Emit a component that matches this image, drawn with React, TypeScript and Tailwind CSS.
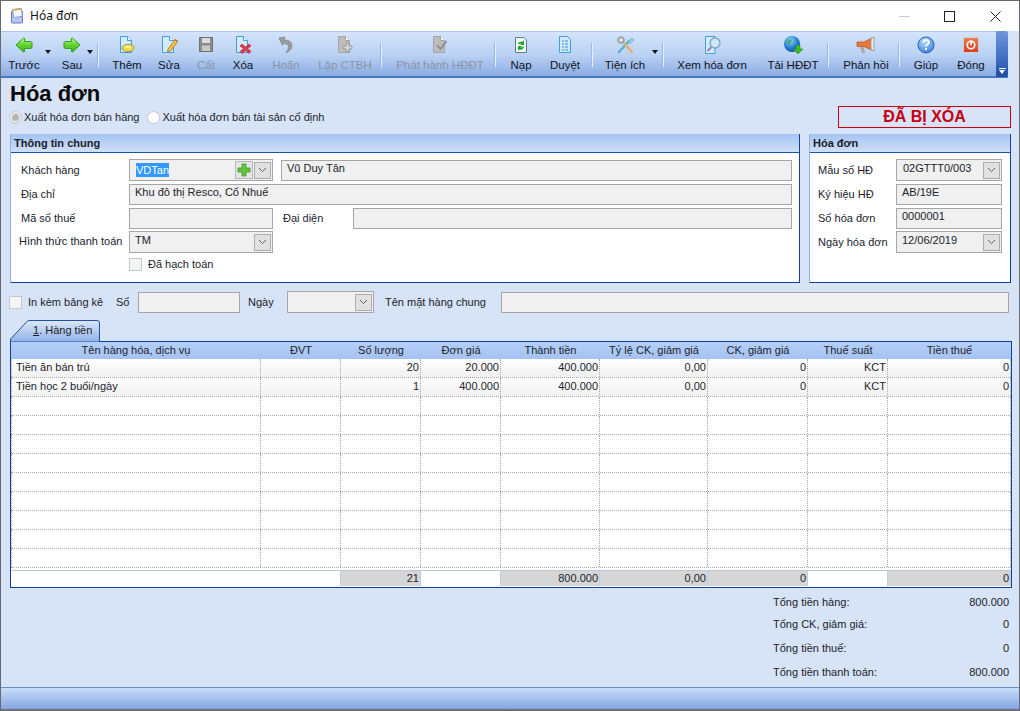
import React from "react";

const Arrow = ({ dir }: { dir: "l" | "r" }) => (
  <svg width="18" height="16" viewBox="0 0 18 16" className={dir === "r" ? "-scale-x-100" : ""}>
    <defs>
      <linearGradient id="ga" x1="0" y1="0" x2="0" y2="1">
        <stop offset="0" stopColor="#c4f58a" />
        <stop offset="0.5" stopColor="#62d230" />
        <stop offset="1" stopColor="#3fb020" />
      </linearGradient>
    </defs>
    <path d="M1 8 L8.5 1 Q9.5 0.6 9.5 2 V4.5 H15.5 Q17 4.5 17 6 V10 Q17 11.5 15.5 11.5 H9.5 V14 Q9.5 15.4 8.5 15 Z" fill="url(#ga)" stroke="#33a01e" strokeWidth="1" strokeLinejoin="round" />
  </svg>
);

const Doc = ({ c = "#3f9fe0", fill = "#d3eafb", children }: { c?: string; fill?: string; children?: React.ReactNode }) => (
  <svg width="20" height="20" viewBox="0 0 20 20">
    <path d="M3.5 1.5 H10.5 L14.5 5.5 V17.5 H3.5 Z" fill={fill} stroke={c} />
    <path d="M10.5 1.5 V5.5 H14.5" fill="#fff" stroke={c} />
    {children}
  </svg>
);

const icons: Record<string, React.ReactNode> = {
  them: (
    <Doc>
      <ellipse cx="11" cy="13" rx="6" ry="3.6" fill="#f0d94a" stroke="#a89a2a" />
      <ellipse cx="11" cy="12" rx="3" ry="1.4" fill="#fbf3a0" />
    </Doc>
  ),
  sua: (
    <Doc>
      <path d="M9 14 L16 4.5 L18.5 6.5 L11.5 16 L8.5 17 Z" fill="#f4c542" stroke="#b8862a" />
      <path d="M16 4.5 L18.5 6.5" stroke="#d05a2a" strokeWidth="1.5" />
    </Doc>
  ),
  cat: (
    <svg width="20" height="20" viewBox="0 0 20 20">
      <path d="M3.5 2.5 H16.5 V16.5 H3.5 Z" fill="#8d8d8d" stroke="#6f6f6f" />
      <rect x="6" y="3" width="8" height="5" fill="#dcdcdc" />
      <rect x="6" y="10.5" width="8" height="5.5" fill="#c8c8c8" />
    </svg>
  ),
  xoa: (
    <Doc>
      <path d="M9 9 L12.5 12 L16 9 L18 11 L14.5 13.5 L18 16.5 L16 18.5 L12.5 15.5 L9 18.5 L7 16.5 L10.5 13.5 L7 11 Z" fill="#e0394a" stroke="#b02030" strokeWidth="0.6" />
    </Doc>
  ),
  hoan: (
    <svg width="20" height="20" viewBox="0 0 20 20">
      <path d="M3 3 L9 2 L8 5 Q16 5 16 11 Q16 15 10 18 Q13 14 12.5 11 Q12 8.5 7 8.5 L6.5 10.5 Z" fill="#9c9c9c" stroke="#868686" strokeWidth="0.8" strokeLinejoin="round" />
    </svg>
  ),
  lap: (
    <Doc c="#a4a4a4" fill="#bdbdbd">
      <path d="M11 8 H14 V11 H17 V14 H14 V17 H11 V14 H8 V11 H11 Z" fill="#d4d4d4" stroke="#9a9a9a" />
    </Doc>
  ),
  phat: (
    <Doc c="#a4a4a4" fill="#bdbdbd">
      <path d="M7 10 L10.5 14 L16.5 6" fill="none" stroke="#8a8a8a" strokeWidth="1.8" />
    </Doc>
  ),
  nap: (
    <svg width="20" height="20" viewBox="0 0 20 20">
      <path d="M4.5 2.5 H13 L15.5 5 V17.5 H4.5 Z" fill="#f4f8f4" stroke="#5d7f8a" />
      <path d="M7 8.5 Q8 6 12 6.5 L13 5 V10 H9 L10.5 8.5 Q9 8.2 8.6 9.5 Z" fill="#1ea52c" />
      <path d="M13 11.5 Q12 15.5 8 14.5 L7 16 V11 H11 L9.5 12.5 Q11 12.9 11.4 11.5 Z" fill="#1ea52c" />
    </svg>
  ),
  duyet: (
    <svg width="20" height="20" viewBox="0 0 20 20">
      <path d="M4.5 1.5 H12.5 L15.5 4.5 V17.5 H4.5 Z" fill="#cfe8fa" stroke="#3f9fe0" />
      <path d="M7 6 H9 M10 6 H13 M7 9 H9 M10 9 H13 M7 12 H9 M10 12 H13 M7 15 H9 M10 15 H13" stroke="#3a8fd8" strokeWidth="1.2" />
    </svg>
  ),
  tien: (
    <svg width="22" height="20" viewBox="0 0 22 20">
      <path d="M5 17 L15 6" stroke="#5fb0dc" strokeWidth="2.6" strokeLinecap="round" />
      <path d="M14 7 L18 3 L20 5 L16 9 Z" fill="#9ad0ec" stroke="#5a9ac0" strokeWidth="0.6" />
      <path d="M18 17 L9 7" stroke="#e4b060" strokeWidth="2.2" strokeLinecap="round" />
      <circle cx="7" cy="5" r="3.2" fill="#c4c4c4" stroke="#8a8a8a" />
      <circle cx="7" cy="5" r="1.2" fill="#dde8f8" />
    </svg>
  ),
  xem: (
    <svg width="24" height="20" viewBox="0 0 24 20">
      <path d="M5.5 1.5 H15 V18.5 H5.5 Z" fill="#d7ecfa" stroke="#3f9fe0" />
      <circle cx="15" cy="8" r="5" fill="#cfe8f8" stroke="#7aa8c8" strokeWidth="1.4" />
      <path d="M11.5 12 L7.5 16" stroke="#a07ac8" strokeWidth="2" />
    </svg>
  ),
  tai: (
    <svg width="22" height="20" viewBox="0 0 22 20">
      <defs>
        <radialGradient id="gg" cx="0.4" cy="0.3" r="0.8">
          <stop offset="0" stopColor="#8fd4f8" />
          <stop offset="0.6" stopColor="#1a78d0" />
          <stop offset="1" stopColor="#0a4a9a" />
        </radialGradient>
      </defs>
      <circle cx="10" cy="9" r="8" fill="url(#gg)" />
      <path d="M5 6 Q8 3 10 5 Q9 9 6 10 Z" fill="#46a850" opacity="0.8" />
      <path d="M14 10 H18 V14 H21 L16 19 L11 14 H14 Z" fill="#3fb82e" stroke="#1f8a1a" strokeWidth="0.6" />
    </svg>
  ),
  phan: (
    <svg width="24" height="20" viewBox="0 0 24 20">
      <path d="M3 7 H10 L19 2.5 V15.5 L10 11.5 H3 Z" fill="#e87838" stroke="#b85a28" strokeWidth="0.8" />
      <path d="M17 3.5 L20 2 V16 L17 14.5 Z" fill="#e8e8e8" stroke="#9a9a9a" strokeWidth="0.8" />
      <path d="M6 12 L8 18 H11 L9.5 12 Z" fill="#a8a8a8" />
    </svg>
  ),
  giup: (
    <svg width="20" height="20" viewBox="0 0 20 20">
      <defs>
        <radialGradient id="gh" cx="0.4" cy="0.25" r="0.9">
          <stop offset="0" stopColor="#b8dcfa" />
          <stop offset="1" stopColor="#2a74d8" />
        </radialGradient>
      </defs>
      <circle cx="10" cy="10" r="8" fill="url(#gh)" stroke="#2a62b8" />
      <path d="M7.3 7.8 Q7.5 5.2 10.2 5.2 Q13 5.4 12.8 7.6 Q12.6 9 11 9.8 Q10 10.4 10 11.8" fill="none" stroke="#fff" strokeWidth="1.8" />
      <rect x="9" y="13" width="2" height="2" fill="#fff" />
    </svg>
  ),
  dong: (
    <svg width="20" height="20" viewBox="0 0 20 20">
      <defs>
        <linearGradient id="gd" x1="0" y1="0" x2="0" y2="1">
          <stop offset="0" stopColor="#f08050" />
          <stop offset="1" stopColor="#d83a20" />
        </linearGradient>
      </defs>
      <rect x="2.5" y="2.5" width="15" height="15" rx="1" fill="url(#gd)" stroke="#c8d0d8" />
      <circle cx="10" cy="10" r="3.8" fill="none" stroke="#fff" strokeWidth="1.6" />
      <path d="M10 5.5 V10" stroke="#fff" strokeWidth="1.6" />
    </svg>
  ),
};

const Btn = ({ className, icon, label, off }: { className: string; icon: React.ReactNode; label: string; off?: boolean }) => (
  <div className={`flex flex-col items-center shrink-0 ${className}`}>
    <div className="h-[24px] mt-[1px] flex items-center justify-center">{icon}</div>
    <div className={`mt-[1px] leading-[14px] whitespace-nowrap ${off ? "text-[#8b93a3]" : "text-[#10131a]"}`}>{label}</div>
  </div>
);

const Drop = ({ className }: { className: string }) => (
  <div className={`shrink-0 h-full flex justify-center pt-[18px] ${className}`}>
    <div className="w-0 h-0 border-x-[3.5px] border-x-transparent border-t-[4px] border-t-[#111]" />
  </div>
);

const Sep = ({ className }: { className: string }) => (
  <div className={`shrink-0 w-[2px] h-[24px] mt-[11px] bg-[#e6effc] border-l border-[#9db8e4] ${className}`} />
);

const Toolbar = () => (
  <div className="h-[47px] flex text-[11.5px] shrink-0">
    <div className="w-[1007px] h-[47px] flex bg-[linear-gradient(to_bottom,#d3e3fa,#bcd3f5_50%,#8aabe2)] border-t border-[#a8c4ee] border-b-2 border-b-[#4a78c0]">
      <Btn className="w-[36px] ml-[5px]" icon={<Arrow dir="l" />} label="Trước" />
      <Drop className="w-[12px]" />
      <Btn className="w-[24px] ml-[6px]" icon={<Arrow dir="r" />} label="Sau" />
      <Drop className="w-[12px]" />
      <Sep className="ml-[1px]" />
      <Btn className="w-[42px] ml-[7px]" icon={icons.them} label="Thêm" />
      <Btn className="w-[42px]" icon={icons.sua} label="Sửa" />
      <Btn className="w-[32px]" icon={icons.cat} label="Cất" off />
      <Btn className="w-[42px]" icon={icons.xoa} label="Xóa" />
      <Btn className="w-[44px]" icon={icons.hoan} label="Hoãn" off />
      <Btn className="w-[70px] ml-[2px]" icon={icons.lap} label="Lập CTBH" off />
      <Sep className="" />
      <Btn className="w-[100px] ml-[8px]" icon={icons.phat} label="Phát hành HĐĐT" off />
      <Sep className="ml-[4px]" />
      <Btn className="w-[42px] ml-[4px]" icon={icons.nap} label="Nạp" />
      <Btn className="w-[46px]" icon={icons.duyet} label="Duyệt" />
      <Sep className="ml-[3px]" />
      <Btn className="w-[48px] ml-[8px]" icon={icons.tien} label="Tiện ích" />
      <Drop className="w-[12px]" />
      <Sep className="ml-[1px]" />
      <Btn className="w-[84px] ml-[6px]" icon={icons.xem} label="Xem hóa đơn" />
      <Btn className="w-[66px] ml-[6px]" icon={icons.tai} label="Tải HĐĐT" />
      <Sep className="ml-[1px]" />
      <Btn className="w-[64px] ml-[5px]" icon={icons.phan} label="Phản hồi" />
      <Sep className="" />
      <Btn className="w-[40px] ml-[6px]" icon={icons.giup} label="Giúp" />
      <Btn className="w-[50px]" icon={icons.dong} label="Đóng" />
      <div className="w-[12px] h-[46px] -mt-[1px] rounded-r-[3px] bg-[linear-gradient(to_bottom,#6f97dc,#3f6cc4_60%,#1f4da4)] flex flex-col items-center justify-end pb-[3px]">
        <div className="w-[7px] h-[1px] bg-white mb-[1px]" />
        <div className="w-0 h-0 border-x-[3.5px] border-x-transparent border-t-[4px] border-t-white" />
      </div>
    </div>
  </div>
);

const Chevron = () => (
  <div className="w-[17px] h-[17px] shrink-0 border border-[#adadad] bg-[#e1e1e1] flex items-center justify-center">
    <svg width="9" height="6" viewBox="0 0 9 6">
      <path d="M1 1 L4.5 4.5 L8 1" fill="none" stroke="#606060" strokeWidth="1" />
    </svg>
  </div>
);

const Box = ({ className = "", children }: { className?: string; children?: React.ReactNode }) => (
  <div className={`h-[21px] shrink-0 border border-[#a6a6a6] bg-[#f0f0f0] flex items-center pl-[5px] pb-[3px] text-[#20242c] whitespace-nowrap ${className}`}>{children}</div>
);

const Combo = ({ className = "", text }: { className?: string; text?: string }) => (
  <div className={`h-[22px] shrink-0 border border-[#a6a6a6] bg-[#f0f0f0] flex items-center pl-[5px] pr-[1px] text-[#20242c] whitespace-nowrap ${className}`}>
    <span className="flex-1 pb-[3px]">{text}</span>
    <Chevron />
  </div>
);

const Check = ({ className = "" }: { className?: string }) => (
  <div className={`w-[13px] h-[13px] shrink-0 border border-[#c8c8c8] bg-[#f4f5f7] ${className}`} />
);

const PanelHead = ({ title }: { title: string }) => (
  <div className="h-[19px] shrink-0 pl-[3px] pt-[1px] font-bold leading-[16px] text-[#1a1e28] bg-[linear-gradient(to_bottom,#a4c3f2,#cfe0f9)] border-b border-[#1f50aa]">{title}</div>
);

const Panel = ({ className, title, children }: { className: string; title: string; children: React.ReactNode }) => (
  <div className={`h-[149px] shrink-0 flex flex-col bg-white border-r border-b border-[#13409e] border-l border-l-[#8fb2ec] ${className}`}>
    <PanelHead title={title} />
    {children}
  </div>
);

const colW = ["w-[250px]", "w-[80px]", "w-[80px]", "w-[80px]", "w-[99px]", "w-[108px]", "w-[100px]", "w-[80px]", "w-[123px]"];
const heads = ["Tên hàng hóa, dịch vụ", "ĐVT", "Số lượng", "Đơn giá", "Thành tiền", "Tỷ lệ CK, giảm giá", "CK, giảm giá", "Thuế suất", "Tiền thuế"];
const rows = [
  ["Tiền ăn bán trú", "", "20", "20.000", "400.000", "0,00", "0", "KCT", "0"],
  ["Tiền học 2 buổi/ngày", "", "1", "400.000", "400.000", "0,00", "0", "KCT", "0"],
  ...Array.from({ length: 9 }, () => ["", "", "", "", "", "", "", "", ""]),
];
const foot: [string, boolean][] = [
  ["", false],
  ["", false],
  ["21", true],
  ["", false],
  ["800.000", true],
  ["0,00", true],
  ["0", true],
  ["", false],
  ["0", true],
];

const Total = ({ label, value, className }: { label: string; value: string; className: string }) => (
  <div className={`flex justify-between ml-[772px] mr-[10px] leading-[14px] text-[#20242c] ${className}`}>
    <span>{label}</span>
    <span>{value}</span>
  </div>
);

export default function App() {
  return (
    <div className="w-[1020px] h-[711px] overflow-hidden flex flex-col bg-[#d7e3f7] border-x border-t border-[#666a70] text-[11px] font-['Liberation_Sans',Arial,sans-serif] text-[#20242c]">
      {/* title bar */}
      <div className="h-[30px] shrink-0 bg-white flex items-center">
        <svg width="15" height="16" viewBox="0 0 15 16" className="ml-[9px]">
          <rect x="1.5" y="3" width="11" height="12" rx="1" fill="#b8c6f0" stroke="#6a78b8" />
          <rect x="3" y="1" width="9" height="8" rx="1" fill="#f2f4fb" stroke="#8a96c8" transform="rotate(-8 7 5)" />
          <path d="M3 2 L11 1" stroke="#e8a030" strokeWidth="1.5" />
        </svg>
        <span className="ml-[5px] pb-[1px] font-['Noto_Sans',sans-serif] text-[12px] text-[#111]">Hóa đơn</span>
        <div className="ml-auto flex items-center">
          <div className="w-[11px] h-[1px] bg-[#c8c8c8]" />
          <div className="w-[11px] h-[11px] border border-[#222] ml-[34px]" />
          <svg width="11" height="11" viewBox="0 0 11 11" className="ml-[35px] mr-[18px]">
            <path d="M0.5 0.5 L10.5 10.5 M10.5 0.5 L0.5 10.5" stroke="#222" strokeWidth="1" />
          </svg>
        </div>
      </div>

      <Toolbar />

      {/* heading */}
      <div className="h-[56px] shrink-0 flex justify-between">
        <div className="ml-[8px]">
          <div className="pl-[1px] mt-[4px] text-[22px] leading-[24px] font-bold text-[#0a0a0a]">Hóa đơn</div>
          <div className="flex items-center mt-[3px] h-[16px]">
            <div className="w-[13px] h-[13px] rounded-full border border-[#c4c8cf] bg-[#e8e8e8] flex items-center justify-center">
              <div className="w-[7px] h-[7px] rounded-full bg-[#b4b4b4]" />
            </div>
            <span className="ml-[2px]">Xuất hóa đơn bán hàng</span>
            <div className="ml-[8px] w-[13px] h-[13px] rounded-full border border-[#c4c8cf] bg-white" />
            <span className="ml-[2px]">Xuất hóa đơn bán tài sản cố định</span>
          </div>
        </div>
        <div className="mt-[28px] mr-[8px] w-[173px] h-[22px] border border-[#c80010] flex items-center justify-center text-[16px] font-bold text-[#c80010]">ĐÃ BỊ XÓA</div>
      </div>

      {/* panels */}
      <div className="flex ml-[9px] gap-[9px] shrink-0">
        <Panel className="w-[790px]" title="Thông tin chung">
          <div className="flex flex-col pt-[5px]">
            <div className="flex items-center h-[24px]">
              <span className="ml-[10px] w-[108px] shrink-0">Khách hàng</span>
              <div className="w-[144px] h-[22px] shrink-0 border border-[#a6a6a6] bg-[#f0f0f0] flex items-center pl-[6px] pr-[1px]">
                <span className="bg-[#3399ff] text-white leading-[14px]">VDTan</span>
                <div className="ml-auto w-[18px] h-[18px] border border-[#b8b8b8] bg-[#e4e4e4] flex items-center justify-center mr-[1px]">
                  <svg width="14" height="14" viewBox="0 0 14 14">
                    <path d="M5 1 H9 V5 H13 V9 H9 V13 H5 V9 H1 V5 H5 Z" fill="#62c43a" stroke="#3c9a22" strokeWidth="0.8" />
                  </svg>
                </div>
                <Chevron />
              </div>
              <Box className="ml-[8px] w-[511px]">Vũ Duy Tân</Box>
            </div>
            <div className="flex items-center h-[24px]">
              <span className="ml-[10px] w-[108px] shrink-0">Địa chỉ</span>
              <Box className="w-[663px]">Khu đô thị Resco, Cổ Nhuế</Box>
            </div>
            <div className="flex items-center h-[24px]">
              <span className="ml-[10px] w-[108px] shrink-0">Mã số thuế</span>
              <Box className="w-[144px]" />
              <span className="ml-[10px] w-[70px] shrink-0">Đại diện</span>
              <Box className="w-[439px]" />
            </div>
            <div className="flex items-center h-[24px]">
              <span className="ml-[8px] w-[110px] shrink-0 pb-[1px]">Hình thức thanh toán</span>
              <Combo className="w-[144px]" text="TM" />
            </div>
            <div className="flex items-center h-[20px] ml-[118px]">
              <Check />
              <span className="ml-[6px]">Đã hạch toán</span>
            </div>
          </div>
        </Panel>
        <Panel className="w-[202px]" title="Hóa đơn">
          <div className="flex flex-col pt-[5px]">
            <div className="flex items-center h-[24px]">
              <span className="ml-[8px] w-[78px] shrink-0">Mẫu số HĐ</span>
              <Combo className="w-[106px] pl-[6px]" text="02GTTT0/003" />
            </div>
            <div className="flex items-center h-[24px]">
              <span className="ml-[8px] w-[78px] shrink-0">Ký hiệu HĐ</span>
              <Box className="w-[106px]">AB/19E</Box>
            </div>
            <div className="flex items-center h-[24px]">
              <span className="ml-[8px] w-[78px] shrink-0">Số hóa đơn</span>
              <Box className="w-[106px]">0000001</Box>
            </div>
            <div className="flex items-center h-[24px]">
              <span className="ml-[8px] w-[78px] shrink-0">Ngày hóa đơn</span>
              <Combo className="w-[106px] pl-[5px]" text="12/06/2019" />
            </div>
          </div>
        </Panel>
      </div>

      {/* option row */}
      <div className="flex items-center h-[22px] mt-[8px] ml-[8px] shrink-0">
        <Check />
        <span className="ml-[6px] w-[88px] shrink-0 pt-[1px]">In kèm bảng kê</span>
        <span className="w-[22px] shrink-0 pt-[1px]">Số</span>
        <Box className="w-[102px]" />
        <span className="ml-[8px] w-[39px] shrink-0 pt-[1px]">Ngày</span>
        <Combo className="w-[87px]" />
        <span className="ml-[11px] w-[116px] shrink-0 pt-[1px]">Tên mặt hàng chung</span>
        <Box className="w-[508px]" />
      </div>

      {/* tab */}
      <div className="relative ml-[9px] mt-[7px] w-[91px] h-[21px] shrink-0 flex items-center pl-[23px]">
        <svg width="91" height="22" viewBox="0 0 91 22" className="absolute left-0 top-0">
          <defs>
            <linearGradient id="gt" x1="0" y1="0" x2="0" y2="1">
              <stop offset="0" stopColor="#dde8f9" />
              <stop offset="1" stopColor="#8fb0e6" />
            </linearGradient>
          </defs>
          <path d="M0.5 22 V19 L17 1.5 Q18 0.5 20 0.5 H87 Q89.5 0.5 89.5 3 V22 Z" fill="url(#gt)" stroke="#1f50aa" />
        </svg>
        <span className="relative text-[#1a1e28] pb-[1px]"><span className="underline">1</span>. Hàng tiền</span>
      </div>

      {/* grid */}
      <div className="ml-[9px] w-[1002px] h-[247px] shrink-0 border border-[#0f3ea4] bg-white flex flex-col overflow-hidden text-[#20242c]">
        <div className="flex h-[17px] shrink-0 bg-[linear-gradient(to_bottom,#b4cff6,#a4c2f2)] leading-[16px]">
          {heads.map((h, i) => (
            <div key={i} className={`${colW[i]} shrink-0 text-center`}>{h}</div>
          ))}
        </div>
        {rows.map((r, ri) => (
          <div key={ri} className={`flex h-[19px] shrink-0 border-b border-dotted border-[#a8a8a8] ${ri < 2 ? "bg-[linear-gradient(to_bottom,#ffffff,#f0f0f0)]" : "bg-white"}`}>
            {r.map((c, ci) => (
              <div key={ci} className={`${colW[ci]} shrink-0 border-r border-dotted border-[#a8a8a8] pt-[1px] leading-[15px] whitespace-nowrap ${ci === 0 ? "pl-[4px] border-l" : "text-right pr-[1px]"}`}>{c}</div>
            ))}
          </div>
        ))}
        <div className="flex h-[16px] mt-[2px] shrink-0 border-t border-[#bcc8d8]">
          {foot.map(([t, gray], i) => (
            <div key={i} className={`${colW[i]} shrink-0 text-right pr-[1px] leading-[14px] ${i === 0 ? "" : "border-r border-[#bcd0e4]"} ${gray ? "bg-[#d6d6d6]" : "bg-white"}`}>{t}</div>
          ))}
        </div>
      </div>

      {/* totals */}
      <Total className="mt-[7px]" label="Tổng tiền hàng:" value="800.000" />
      <Total className="mt-[8px]" label="Tổng CK, giảm giá:" value="0" />
      <Total className="mt-[10px]" label="Tổng tiền thuế:" value="0" />
      <Total className="mt-[10px]" label="Tổng tiền thanh toán:" value="800.000" />

      {/* status bar */}
      <div className="mt-auto h-[24px] shrink-0 bg-[#707070] pb-[2px]">
        <div className="h-[22px] bg-[linear-gradient(to_bottom,#c9ddf9,#83a5e2)] border-t border-[#6d8fcb]" />
      </div>
    </div>
  );
}
